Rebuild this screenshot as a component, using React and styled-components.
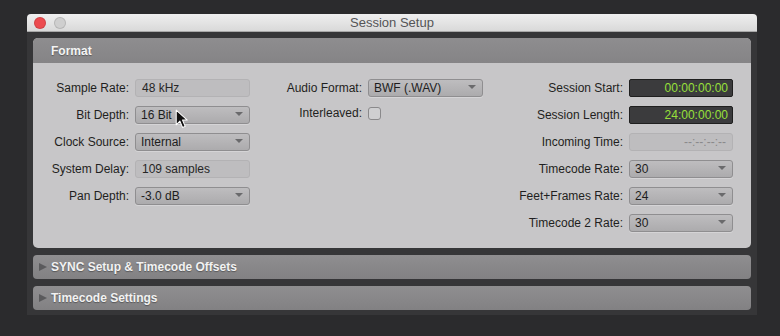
import { Fragment } from "react";
import styled, { createGlobalStyle } from "styled-components";

const GlobalStyle = createGlobalStyle`
  html, body {
    margin: 0;
    padding: 0;
    background: #2b2b2d;
    font-family: "Liberation Sans", Arial, sans-serif;
  }
`;

const Page = styled.div`
  width: 780px;
  height: 336px;
  padding: 14px 23px 0 27px;
  box-sizing: border-box;
  background: #2b2b2d;
`;

const Window = styled.div`
  width: 730px;
  height: 301px;
  background: #363638;
  border-radius: 4px 4px 0 0;
  display: flex;
  flex-direction: column;
  overflow: hidden;
`;

const TitleBar = styled.div`
  position: relative;
  height: 18px;
  flex: none;
  display: flex;
  align-items: center;
  justify-content: center;
  background: linear-gradient(#efefef, #d9d9d9);
  border-bottom: 1px solid #a8a8a8;
  box-sizing: border-box;
  font-size: 13px;
  color: #555557;
`;

const Lights = styled.div`
  position: absolute;
  left: 7px;
  top: 3px;
  display: flex;
  gap: 8px;
`;

const Light = styled.span`
  width: 12px;
  height: 12px;
  border-radius: 50%;
  background: ${({ $color }) => $color};
  box-shadow: inset 0 0 0 1px rgba(0, 0, 0, 0.12);
`;

const Body = styled.div`
  flex: 1;
  padding: 6px;
  display: flex;
  flex-direction: column;
  gap: 7px;
`;

const Panel = styled.div`
  border-radius: 5px;
  overflow: hidden;
  background: #c7c6c8;
`;

const PanelHeader = styled.div`
  height: 25px;
  display: flex;
  align-items: center;
  padding-left: 18px;
  background: linear-gradient(#8e8d8f, #858486);
  color: #f4f4f4;
  font-weight: 700;
  font-size: 12px;
  text-shadow: 0 1px 1px rgba(0, 0, 0, 0.35);
`;

const PanelContent = styled.div`
  height: 185px;
  box-sizing: border-box;
  padding: 16px 18px 0 10px;
  display: flex;
  justify-content: space-between;
  align-items: flex-start;
`;

const Column = styled.div`
  display: grid;
  grid-template-columns: ${({ $label }) => $label}px ${({ $field }) => $field}px;
  column-gap: 6px;
  row-gap: 9px;
  align-items: center;
`;

const Label = styled.div`
  text-align: right;
  font-size: 12px;
  color: #1f1f21;
  white-space: nowrap;
`;

const ReadOnly = styled.div`
  height: 18px;
  box-sizing: border-box;
  padding: 0 6px;
  display: flex;
  align-items: center;
  justify-content: ${({ $right }) => ($right ? "flex-end" : "flex-start")};
  border-radius: 3px;
  border: 1px solid #b3b2b4;
  background: #bebdbf;
  font-size: 12px;
  color: ${({ $dim }) => ($dim ? "#8a898b" : "#262626")};
`;

const Select = styled.div`
  position: relative;
  height: 18px;
  box-sizing: border-box;
  padding: 0 5px;
  display: flex;
  align-items: center;
  border-radius: 3px;
  border: 1px solid #8f8e90;
  background: linear-gradient(#bebdbf, #acabad);
  box-shadow: 0 1px 0 rgba(255, 255, 255, 0.25);
  font-size: 12px;
  color: #1d1d1d;

  &::after {
    content: "";
    position: absolute;
    right: 6px;
    top: 5px;
    border-left: 4px solid transparent;
    border-right: 4px solid transparent;
    border-top: 4px solid #6a6a6c;
  }
`;

const Timecode = styled.div`
  height: 18px;
  box-sizing: border-box;
  padding: 0 4px;
  display: flex;
  align-items: center;
  justify-content: flex-end;
  border-radius: 2px;
  border: 1px solid #1f1f1f;
  background: #3b3b3d;
  color: #98e03a;
  font-size: 12px;
`;

const Checkbox = styled.div`
  width: 13px;
  height: 13px;
  box-sizing: border-box;
  border: 1px solid #8a898b;
  border-radius: 3px;
  background: #cfcfd1;
`;

const CollapsedBar = styled.div`
  height: 24px;
  border-radius: 4px;
  display: flex;
  align-items: center;
  gap: 4px;
  padding-left: 6px;
  background: linear-gradient(#8f8e90, #828183);
  color: #f2f2f2;
  font-weight: 700;
  font-size: 12px;
  text-shadow: 0 1px 1px rgba(0, 0, 0, 0.35);
`;

const Triangle = styled.span`
  width: 0;
  height: 0;
  border-top: 4px solid transparent;
  border-bottom: 4px solid transparent;
  border-left: 8px solid #5a5a5c;
`;

const FieldWrap = styled.div`
  position: relative;
`;

const Cursor = styled.svg`
  position: absolute;
  left: 40px;
  top: 3px;
  pointer-events: none;
`;

const leftRows = [
  { label: "Sample Rate:", value: "48 kHz", kind: "ro" },
  { label: "Bit Depth:", value: "16 Bit", kind: "sel", cursor: true },
  { label: "Clock Source:", value: "Internal", kind: "sel" },
  { label: "System Delay:", value: "109 samples", kind: "ro" },
  { label: "Pan Depth:", value: "-3.0 dB", kind: "sel" },
];

const rightRows = [
  { label: "Session Start:", value: "00:00:00:00", kind: "tc" },
  { label: "Session Length:", value: "24:00:00:00", kind: "tc" },
  { label: "Incoming Time:", value: "--:--:--:--", kind: "dim" },
  { label: "Timecode Rate:", value: "30", kind: "sel" },
  { label: "Feet+Frames Rate:", value: "24", kind: "sel" },
  { label: "Timecode 2 Rate:", value: "30", kind: "sel" },
];

const renderField = (row) => {
  if (row.kind === "ro") return <ReadOnly>{row.value}</ReadOnly>;
  if (row.kind === "tc") return <Timecode>{row.value}</Timecode>;
  if (row.kind === "dim")
    return (
      <ReadOnly $right $dim>
        {row.value}
      </ReadOnly>
    );
  return (
    <FieldWrap>
      <Select>{row.value}</Select>
      {row.cursor && (
        <Cursor width="14" height="20" viewBox="0 0 13 19">
          <path
            d="M1 1 L1 15 L4.5 11.5 L7 17.5 L9.5 16.5 L7 10.5 L11.5 10.5 Z"
            fill="#111"
            stroke="#fff"
            strokeWidth="1"
            strokeLinejoin="round"
          />
        </Cursor>
      )}
    </FieldWrap>
  );
};

const App = () => {
  return (
    <Page>
      <GlobalStyle />
      <Window>
        <TitleBar>
          <Lights>
            <Light $color="#ec4b4f" />
            <Light $color="#cfcfcf" />
          </Lights>
          Session Setup
        </TitleBar>
        <Body>
          <Panel>
            <PanelHeader>Format</PanelHeader>
            <PanelContent>
              <Column $label={86} $field={115}>
                {leftRows.map((row) => (
                  <Fragment key={row.label}>
                    <Label>{row.label}</Label>
                    {renderField(row)}
                  </Fragment>
                ))}
              </Column>
              <Column $label={86} $field={115}>
                <Label>Audio Format:</Label>
                <Select>BWF (.WAV)</Select>
                <Label>Interleaved:</Label>
                <Checkbox />
              </Column>
              <Column $label={114} $field={104}>
                {rightRows.map((row) => (
                  <Fragment key={row.label}>
                    <Label>{row.label}</Label>
                    {renderField(row)}
                  </Fragment>
                ))}
              </Column>
            </PanelContent>
          </Panel>
          <CollapsedBar>
            <Triangle />
            SYNC Setup &amp; Timecode Offsets
          </CollapsedBar>
          <CollapsedBar>
            <Triangle />
            Timecode Settings
          </CollapsedBar>
        </Body>
      </Window>
    </Page>
  );
};

export default App;
